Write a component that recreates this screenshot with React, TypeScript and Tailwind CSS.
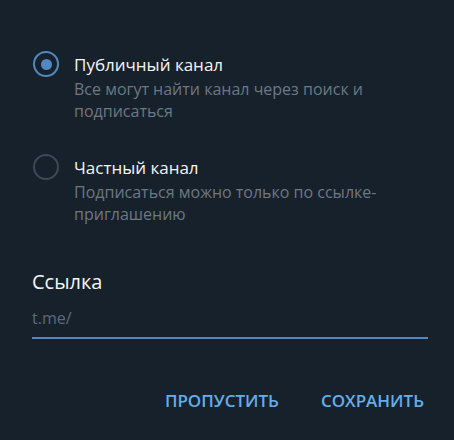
export default function App() {
  return (
    <div className="w-[454px] h-[440px] bg-[#17212b] flex flex-col font-['Open_Sans',sans-serif]">
      {/* Channel type options */}
      <div className="flex flex-col pt-[53px] pl-[33px] pr-6 gap-[34px]">
        <div className="flex items-start gap-[15px]">
          <div className="w-[26px] h-[26px] mt-[-2px] rounded-full border-2 border-[#5288c1] flex items-center justify-center shrink-0">
            <div className="w-[11px] h-[11px] rounded-full bg-[#5288c1]" />
          </div>
          <div className="flex flex-col">
            <div className="text-[17px] leading-[24px] text-[#f5f5f5]">Публичный канал</div>
            <div className="text-[16px] leading-[22px] text-[#6c7883] mt-px">
              Все могут найти канал через поиск и
              <br />
              подписаться
            </div>
          </div>
        </div>
        <div className="flex items-start gap-[15px]">
          <div className="w-[26px] h-[26px] mt-[-2px] rounded-full border-2 border-[#3c4956] shrink-0" />
          <div className="flex flex-col">
            <div className="text-[17px] leading-[24px] text-[#f5f5f5]">Частный канал</div>
            <div className="text-[16px] leading-[22px] text-[#6c7883] mt-px">
              Подписаться можно только по ссылке-
              <br />
              приглашению
            </div>
          </div>
        </div>
      </div>

      {/* Link field */}
      <div className="flex flex-col px-8 pt-[44px]">
        <div className="text-[20px] leading-[26px] text-[#f5f5f5]">Ссылка</div>
        <div className="text-[16px] leading-[22px] text-[#5b6b7a] mt-[12px]">t.me/</div>
        <div className="h-[2px] bg-[#5288c1] mt-[8px] w-[396px]" />
      </div>

      {/* Actions */}
      <div className="flex justify-end gap-[42px] pr-[30px] pt-[50px]">
        <button className="text-[17px] leading-[24px] font-semibold text-[#64aeea]">ПРОПУСТИТЬ</button>
        <button className="text-[17px] leading-[24px] font-semibold text-[#64aeea]">СОХРАНИТЬ</button>
      </div>
    </div>
  );
}
